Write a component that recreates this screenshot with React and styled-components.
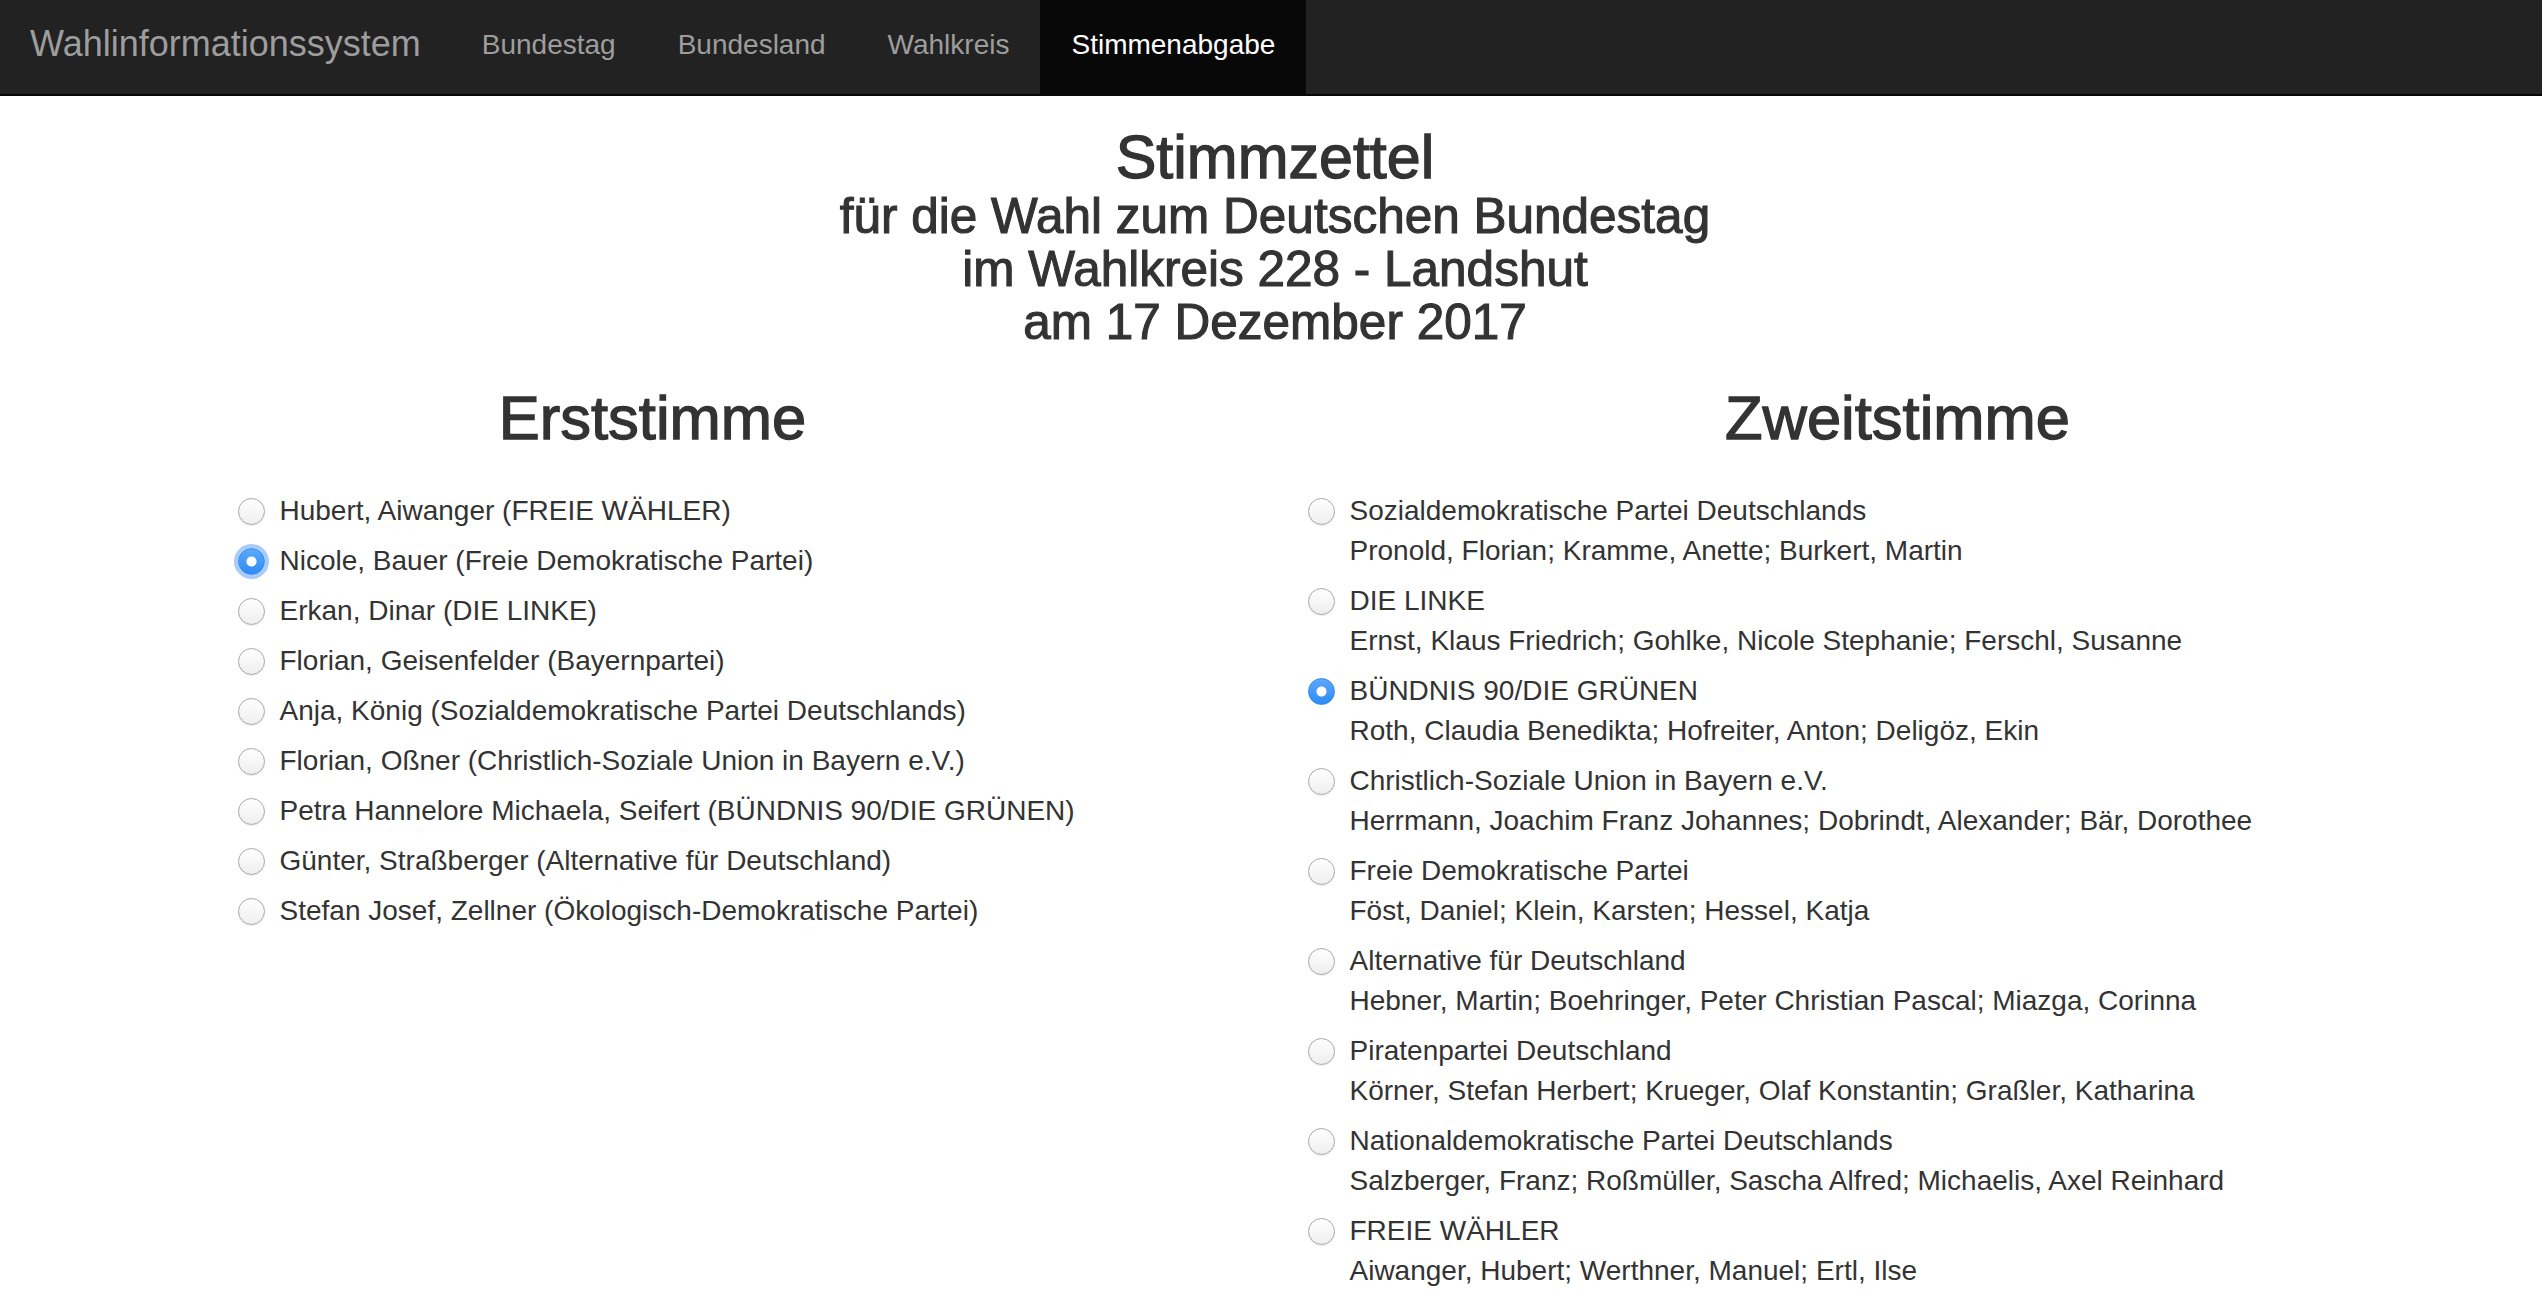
import styled, { createGlobalStyle } from "styled-components";

const GlobalStyle = createGlobalStyle`
  html, body {
    margin: 0;
    padding: 0;
    background: #ffffff;
  }
  body {
    font-family: "Liberation Sans", Arial, Helvetica, sans-serif;
    color: #333333;
  }
  * {
    box-sizing: border-box;
  }
`;

const erststimme = [
  "Hubert, Aiwanger (FREIE WÄHLER)",
  "Nicole, Bauer (Freie Demokratische Partei)",
  "Erkan, Dinar (DIE LINKE)",
  "Florian, Geisenfelder (Bayernpartei)",
  "Anja, König (Sozialdemokratische Partei Deutschlands)",
  "Florian, Oßner (Christlich-Soziale Union in Bayern e.V.)",
  "Petra Hannelore Michaela, Seifert (BÜNDNIS 90/DIE GRÜNEN)",
  "Günter, Straßberger (Alternative für Deutschland)",
  "Stefan Josef, Zellner (Ökologisch-Demokratische Partei)",
];

const zweitstimme = [
  {
    party: "Sozialdemokratische Partei Deutschlands",
    names: "Pronold, Florian; Kramme, Anette; Burkert, Martin",
  },
  {
    party: "DIE LINKE",
    names: "Ernst, Klaus Friedrich; Gohlke, Nicole Stephanie; Ferschl, Susanne",
  },
  {
    party: "BÜNDNIS 90/DIE GRÜNEN",
    names: "Roth, Claudia Benedikta; Hofreiter, Anton; Deligöz, Ekin",
  },
  {
    party: "Christlich-Soziale Union in Bayern e.V.",
    names: "Herrmann, Joachim Franz Johannes; Dobrindt, Alexander; Bär, Dorothee",
  },
  {
    party: "Freie Demokratische Partei",
    names: "Föst, Daniel; Klein, Karsten; Hessel, Katja",
  },
  {
    party: "Alternative für Deutschland",
    names: "Hebner, Martin; Boehringer, Peter Christian Pascal; Miazga, Corinna",
  },
  {
    party: "Piratenpartei Deutschland",
    names: "Körner, Stefan Herbert; Krueger, Olaf Konstantin; Graßler, Katharina",
  },
  {
    party: "Nationaldemokratische Partei Deutschlands",
    names: "Salzberger, Franz; Roßmüller, Sascha Alfred; Michaelis, Axel Reinhard",
  },
  {
    party: "FREIE WÄHLER",
    names: "Aiwanger, Hubert; Werthner, Manuel; Ertl, Ilse",
  },
];

const Navbar = styled.nav`
  display: flex;
  align-items: stretch;
  height: 96px;
  background: #222222;
  border-bottom: 2px solid #080808;
`;

const Brand = styled.a`
  display: block;
  padding: 0 30px 6px 30px;
  font-size: 36px;
  line-height: 88px;
  color: #9d9d9d;
  text-decoration: none;
  white-space: nowrap;
`;

const NavList = styled.ul`
  display: flex;
  margin: 0;
  padding: 0;
  list-style: none;
`;

const NavLink = styled.a`
  display: block;
  height: 94px;
  padding: 0 31px 5px 31px;
  font-size: 28px;
  line-height: 89px;
  text-decoration: none;
  white-space: nowrap;
  color: ${(p) => (p.$active ? "#ffffff" : "#9d9d9d")};
  background: ${(p) => (p.$active ? "#080808" : "transparent")};
`;

const Page = styled.main`
  max-width: 2542px;
  padding: 0 22px 0 30px;
`;

const Ballot = styled.header`
  margin-top: 28px;
  text-align: center;
`;

const Title = styled.h2`
  margin: 0;
  font-size: 61px;
  line-height: 66px;
  font-weight: 500;
  -webkit-text-stroke: 1.3px #333333;
`;

const SubTitle = styled.h3`
  margin: 0;
  font-size: 49.5px;
  line-height: 52.8px;
  font-weight: 500;
  -webkit-text-stroke: 1.1px #333333;
`;

const Columns = styled.div`
  display: grid;
  grid-template-columns: 1fr 1fr;
  margin-top: 37px;
`;

const Column = styled.section`
  display: flex;
  flex-direction: column;
  align-items: center;
`;

const ColumnTitle = styled.h2`
  margin: 0 0 20px 0;
  font-size: 61.5px;
  line-height: 66px;
  font-weight: 500;
  text-align: center;
  -webkit-text-stroke: 1.3px #333333;
`;

const RadioList = styled.div`
  width: ${(p) => p.$width}px;
  display: flex;
  flex-direction: column;
  gap: 10px;
  padding-top: 20px;
`;

const Option = styled.label`
  display: flex;
  align-items: flex-start;
  gap: 15px;
  font-size: 28px;
  line-height: 40px;
  color: #333333;
  cursor: pointer;
  white-space: nowrap;
`;

const Radio = styled.input.attrs({ type: "radio" })`
  appearance: none;
  flex: none;
  width: 27px;
  height: 27px;
  margin: 6.5px 0 0 0;
  border-radius: 50%;
  border: 1px solid #a8a8a8;
  background: linear-gradient(#ffffff, #eeeeee);
  box-shadow: inset 0 1px 1px rgba(255, 255, 255, 0.9),
    0 1px 1px rgba(0, 0, 0, 0.08);
  outline: none;
  cursor: pointer;

  &:checked {
    border-color: #2f86f2;
    background: radial-gradient(circle, #ffffff 0 4.5px, transparent 5.5px),
      linear-gradient(#5aa9fb, #2e8cf6);
    box-shadow: ${(p) =>
      p.$focused ? "0 0 0 4px rgba(120, 175, 250, 0.65)" : "none"};
  }
`;

const OptionText = styled.div`
  display: flex;
  flex-direction: column;
`;

export default function App() {
  return (
    <>
      <GlobalStyle />
      <Navbar>
        <Brand href="#">Wahlinformationssystem</Brand>
        <NavList>
          <li>
            <NavLink href="#">Bundestag</NavLink>
          </li>
          <li>
            <NavLink href="#">Bundesland</NavLink>
          </li>
          <li>
            <NavLink href="#">Wahlkreis</NavLink>
          </li>
          <li>
            <NavLink href="#" $active>
              Stimmenabgabe
            </NavLink>
          </li>
        </NavList>
      </Navbar>
      <Page>
        <Ballot>
          <Title>Stimmzettel</Title>
          <SubTitle>für die Wahl zum Deutschen Bundestag</SubTitle>
          <SubTitle>im Wahlkreis 228 - Landshut</SubTitle>
          <SubTitle>am 17 Dezember 2017</SubTitle>
        </Ballot>
        <Columns>
          <Column>
            <ColumnTitle>Erststimme</ColumnTitle>
            <RadioList $width={830}>
              {erststimme.map((name, i) => (
                <Option key={name}>
                  <Radio
                    name="erststimme"
                    defaultChecked={i === 1}
                    $focused={i === 1}
                  />
                  <OptionText>{name}</OptionText>
                </Option>
              ))}
            </RadioList>
          </Column>
          <Column>
            <ColumnTitle>Zweitstimme</ColumnTitle>
            <RadioList $width={1180}>
              {zweitstimme.map((item, i) => (
                <Option key={item.party}>
                  <Radio name="zweitstimme" defaultChecked={i === 2} />
                  <OptionText>
                    <span>{item.party}</span>
                    <span>{item.names}</span>
                  </OptionText>
                </Option>
              ))}
            </RadioList>
          </Column>
        </Columns>
      </Page>
    </>
  );
}
